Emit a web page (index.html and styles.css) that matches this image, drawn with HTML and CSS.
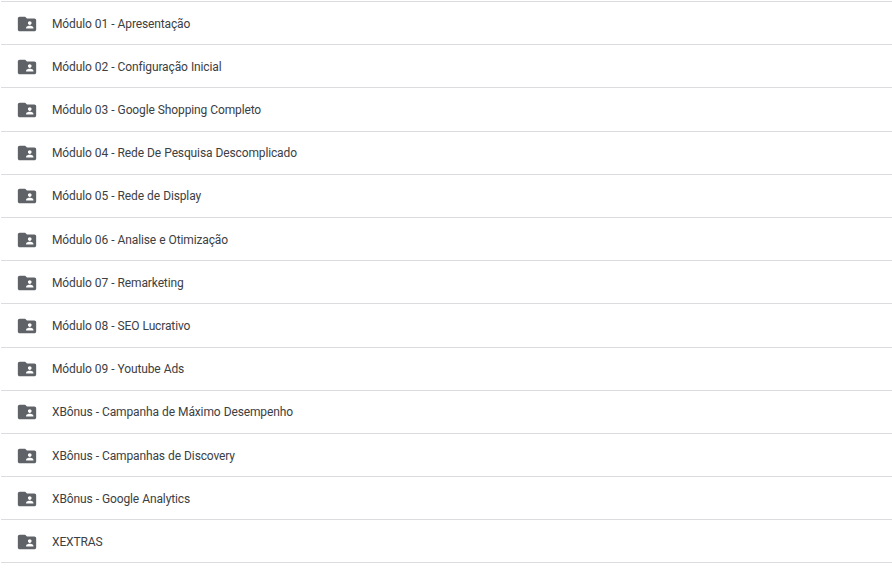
FILE: index.html
```html
<!DOCTYPE html>
<html lang="pt-BR">
<head>
    <meta charset="UTF-8">
    <title>Módulos</title>
    <link rel="stylesheet" href="styles.css">
</head>
<body>

<svg class="defs" width="0" height="0">
    <symbol id="folder-shared" viewBox="0 0 24 24">
        <path d="M20 6h-8l-2-2H4c-1.1 0-2 .9-2 2v12c0 1.1.9 2 2 2h16c1.1 0 2-.9 2-2V8c0-1.1-.9-2-2-2zm-5 3c1.1 0 2 .9 2 2s-.9 2-2 2-2-.9-2-2 .9-2 2-2zm4 8h-8v-1c0-1.33 2.67-2 4-2s4 .67 4 2v1z"/>
    </symbol>
</svg>

<ul class="list">
    <li class="row"><svg class="icon"><use href="#folder-shared"/></svg><span>Módulo 01 - Apresentação</span></li>
    <li class="row"><svg class="icon"><use href="#folder-shared"/></svg><span>Módulo 02 - Configuração Inicial</span></li>
    <li class="row"><svg class="icon"><use href="#folder-shared"/></svg><span>Módulo 03 - Google Shopping Completo</span></li>
    <li class="row"><svg class="icon"><use href="#folder-shared"/></svg><span>Módulo 04 - Rede De Pesquisa Descomplicado</span></li>
    <li class="row"><svg class="icon"><use href="#folder-shared"/></svg><span>Módulo 05 - Rede de Display</span></li>
    <li class="row"><svg class="icon"><use href="#folder-shared"/></svg><span>Módulo 06 - Analise e Otimização</span></li>
    <li class="row"><svg class="icon"><use href="#folder-shared"/></svg><span>Módulo 07 - Remarketing</span></li>
    <li class="row"><svg class="icon"><use href="#folder-shared"/></svg><span>Módulo 08 - SEO Lucrativo</span></li>
    <li class="row"><svg class="icon"><use href="#folder-shared"/></svg><span>Módulo 09 - Youtube Ads</span></li>
    <li class="row"><svg class="icon"><use href="#folder-shared"/></svg><span>XBônus - Campanha de Máximo Desempenho</span></li>
    <li class="row"><svg class="icon"><use href="#folder-shared"/></svg><span>XBônus - Campanhas de Discovery</span></li>
    <li class="row"><svg class="icon"><use href="#folder-shared"/></svg><span>XBônus - Google Analytics</span></li>
    <li class="row"><svg class="icon"><use href="#folder-shared"/></svg><span>XEXTRAS</span></li>
</ul>

</body>
</html>
```
FILE: styles.css
```css
body {
    margin: 0;
    background-color: #fff;
    font-family: Roboto, "Liberation Sans", sans-serif;
}

.defs {
    display: block;
}

.list {
    list-style: none;
    margin: 1.15px 0 0 1px;
    padding: 0;
    border-top: 1px solid #dadce0;
}

.row {
    display: flex;
    align-items: center;
    box-sizing: border-box;
    height: 43.172px;
    padding: 1.12px 0 0 15px;
    border-bottom: 1px solid #dadce0;
    font-size: 12px;
    letter-spacing: -.133px;
    word-spacing: .33px;
    color: #3c4043;
}

.icon {
    width: 22px;
    height: 22px;
    margin-right: 14px;
    fill: #5f6368;
}
```
